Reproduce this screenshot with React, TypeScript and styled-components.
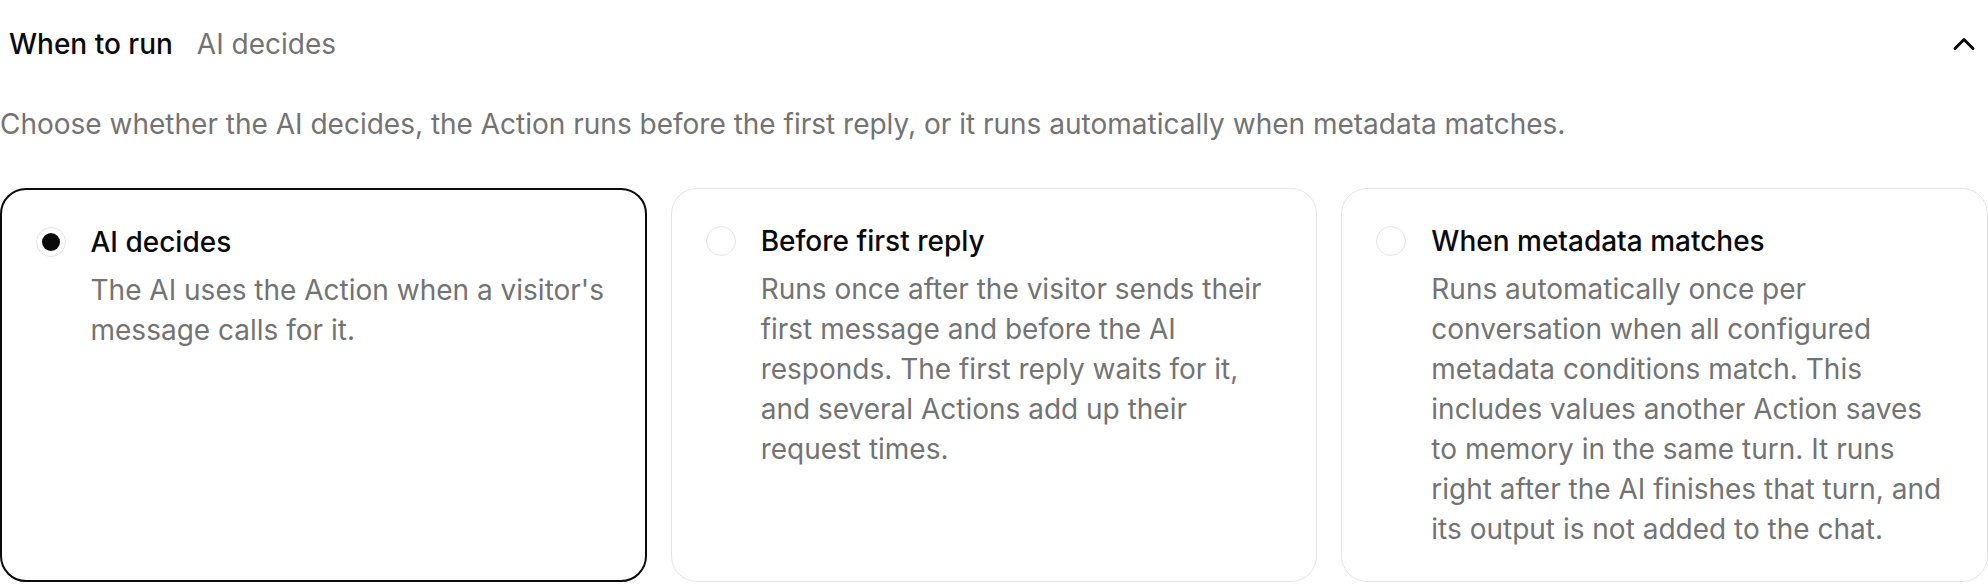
import { useState } from "react";
import styled, { createGlobalStyle } from "styled-components";
import { ChevronUp } from "lucide-react";

const GlobalStyle = createGlobalStyle`
  body {
    margin: 0;
    background: #ffffff;
    font-family: Inter, "Noto Sans", sans-serif;
    color: #0a0a0a;
    -webkit-font-smoothing: antialiased;
  }
`;

const Section = styled.section`
  width: 1988px;
`;

const Header = styled.button`
  display: flex;
  align-items: center;
  width: 100%;
  height: 88px;
  padding: 0 6px 0 9px;
  border: 0;
  background: transparent;
  font: inherit;
  cursor: pointer;
  color: #0a0a0a;
`;

const HeaderTitle = styled.span`
  font-size: 28px;
  font-weight: 500;
`;

const HeaderValue = styled.span`
  margin-left: 24px;
  font-size: 28px;
  color: #737373;
`;

const Toggle = styled.span`
  display: flex;
  margin-left: auto;
`;

const HelpText = styled.p`
  margin: 16px 0 0;
  font-size: 28px;
  line-height: 40px;
  color: #737373;
`;

const Options = styled.div`
  display: grid;
  grid-template-columns: repeat(3, 1fr);
  gap: 24px;
  margin-top: 44px;
`;

const OptionCard = styled.label<{ $active: boolean }>`
  display: flex;
  align-items: flex-start;
  gap: 25px;
  padding: ${(p) => (p.$active ? "31.5px 33.5px" : "32px 34px")};
  border: ${(p) => (p.$active ? "2px solid #0a0a0a" : "1.5px solid #e5e5e5")};
  border-radius: 26px;
  cursor: pointer;
`;

const Radio = styled.span<{ $checked: boolean }>`
  flex: none;
  display: flex;
  align-items: center;
  justify-content: center;
  width: 30px;
  height: 30px;
  margin-top: 5px;
  border: 1.5px solid #e5e5e5;
  border-radius: 50%;
  box-sizing: border-box;
  &::after {
    content: "";
    width: 18px;
    height: 18px;
    border-radius: 50%;
    background: #0a0a0a;
    display: ${(p) => (p.$checked ? "block" : "none")};
  }
`;

const OptionBody = styled.div`
  display: flex;
  flex-direction: column;
  gap: 8px;
`;

const OptionTitle = styled.span`
  font-size: 28px;
  line-height: 40px;
  font-weight: 500;
  color: #0a0a0a;
`;

const OptionText = styled.span`
  font-size: 28px;
  line-height: 40px;
  color: #737373;
`;

const modes = [
  {
    id: "ai",
    title: "AI decides",
    text: "The AI uses the Action when a visitor's message calls for it.",
  },
  {
    id: "first",
    title: "Before first reply",
    text: "Runs once after the visitor sends their first message and before the AI responds. The first reply waits for it, and several Actions add up their request times.",
  },
  {
    id: "metadata",
    title: "When metadata matches",
    text: "Runs automatically once per conversation when all configured metadata conditions match. This includes values another Action saves to memory in the same turn. It runs right after the AI finishes that turn, and its output is not added to the chat.",
  },
];

export default function App() {
  const [mode, setMode] = useState("ai");
  const current = modes.find((m) => m.id === mode);

  return (
    <Section>
      <GlobalStyle />
      <Header type="button">
        <HeaderTitle>When to run</HeaderTitle>
        <HeaderValue>{current?.title}</HeaderValue>
        <Toggle>
          <ChevronUp size={36} strokeWidth={2} />
        </Toggle>
      </Header>
      <HelpText>
        Choose whether the AI decides, the Action runs before the first reply, or it runs
        automatically when metadata matches.
      </HelpText>
      <Options>
        {modes.map((m) => (
          <OptionCard key={m.id} $active={m.id === mode} onClick={() => setMode(m.id)}>
            <Radio $checked={m.id === mode} />
            <OptionBody>
              <OptionTitle>{m.title}</OptionTitle>
              <OptionText>{m.text}</OptionText>
            </OptionBody>
          </OptionCard>
        ))}
      </Options>
    </Section>
  );
}
